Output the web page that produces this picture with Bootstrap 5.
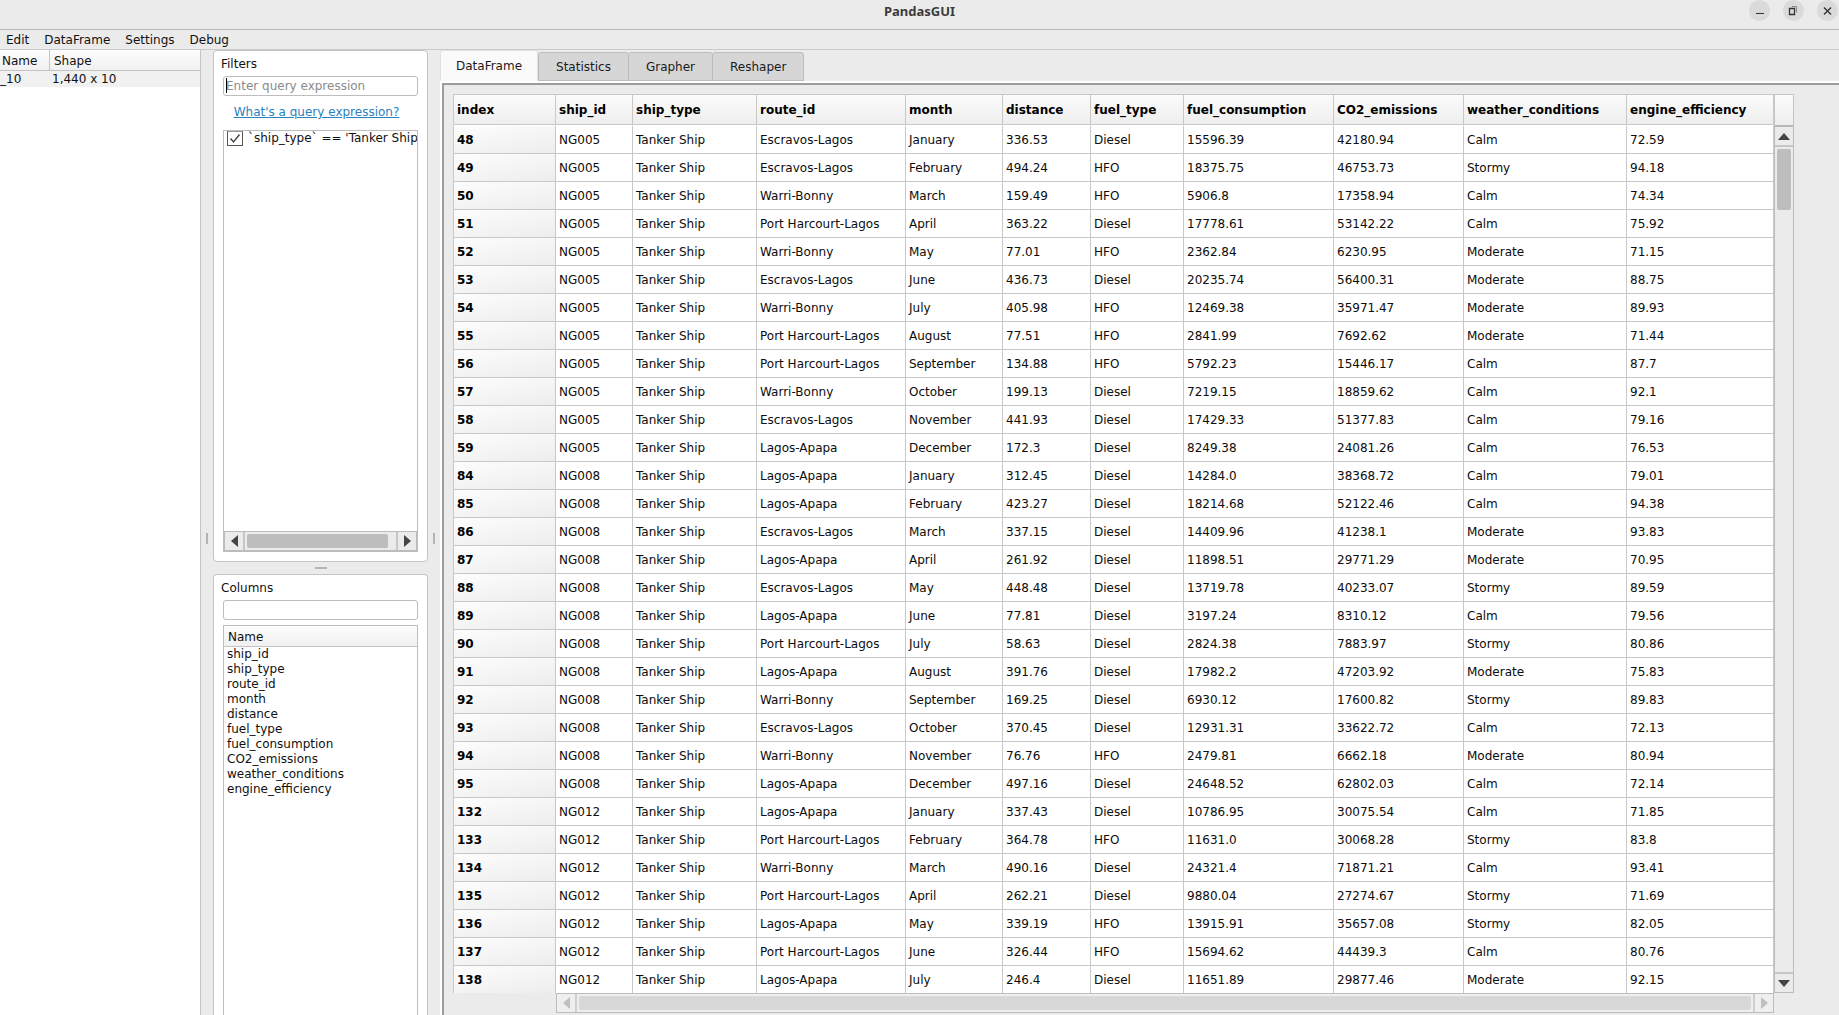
<!DOCTYPE html>
<html lang="en">
<head>
<meta charset="utf-8">
<meta name="viewport" content="width=device-width, initial-scale=1">
<title>PandasGUI</title>
<link href="https://cdn.jsdelivr.net/npm/bootstrap@5.3.0/dist/css/bootstrap.min.css" rel="stylesheet">
<style>
:root { --line: #c4c4c4; --win: #ebebeb; }
body { font: 12px/15px "DejaVu Sans", sans-serif; color: #111; background: var(--win); }
button { font: inherit; color: inherit; border: 0; padding: 0; background: none; }

/* window frame */
.titlebar { height: 30px; border-bottom: 1px solid #b9b9b9; }
.app-title { font: 700 13px/22px "Noto Sans", sans-serif; color: #3b3b3b; }
.win-btns { top: 0; right: 1px; height: 22px; gap: 13px; }
.win-btn { width: 21px; height: 21px; border-radius: 50%; background: #dadada; }
.win-btn svg { display: block; margin: auto; }
.menubar { height: 20px; padding: 2px 6px 0; gap: 15px; border-bottom: 1px solid #cacaca; }

/* left: list of frames */
.frames-pane { width: 201px; border-right: 1px solid var(--line); }
.plain-grid { border-collapse: separate; border-spacing: 0; table-layout: fixed; width: 100%; }
.plain-grid th { font-weight: 400; height: 21px; padding: 2px 4px 0; border-bottom: 1px solid var(--line); background: linear-gradient(#fdfdfd, #f0f0f0); }
.frames-pane td { height: 16px; background: #f1f1f1; }
.frames-pane .c-name { width: 50px; padding: 2px 0 0 2px; border-right: 1px solid var(--line); }
.frames-pane td:first-child { padding: 0; }
.frames-pane td + td { padding: 0 2px; }

/* splitters */
.split-v { width: 12px; }
.split-v::after { content: ""; width: 2px; height: 11px; margin-top: 11px; background: #b4b4b4; }
.split-h { height: 12px; }
.split-h::after { content: ""; width: 12px; height: 2px; background: #b4b4b4; }

/* docks */
.docks { width: 215px; }
.dock { background: #fff; border: 1px solid var(--line); border-radius: 4px; padding: 6px 9px 9px; }
.dock-filters { height: 512px; }
.dock-columns { border-bottom: 0; border-radius: 4px 4px 0 0; padding-bottom: 0; }
.dock-title { margin: 0 -2px 4px; }
.line-edit { width: 100%; height: 20px; border: 1px solid #bdbdbd; border-radius: 3px; padding: 0 2px; font: inherit; background: #fff; outline: 0; }
.line-edit::placeholder { color: #8b8b8b; opacity: 1; }
.caret { left: 3px; top: 2px; width: 1px; height: 15px; background: #000; }
.help-link { color: #2a82bd; margin: 9px 8px 10px 0; }
.view-box { border: 1px solid #bdbdbd; }
.dock-columns .view-box { margin-top: 5px; }
.filter-item { padding: 0 0 0 3px; gap: 5px; white-space: nowrap; overflow: hidden; }
.tick { appearance: none; flex: none; width: 16px; height: 15px; margin: 0; border: 1px solid #555; border-top-color: #999; background: #fff url("data:image/svg+xml,%3Csvg xmlns='http://www.w3.org/2000/svg' viewBox='0 0 14 13'%3E%3Cpath d='M2.5 6.5l3 3.5 6-7.5' fill='none' stroke='%23444' stroke-width='1.4'/%3E%3C/svg%3E") center/14px 13px no-repeat; }
.column-list td { height: 15px; padding: 0 3px; }

/* scroll bars */
.sb { background: #ebebeb; border: 1px solid #bcbcbc; }
.sb-h { height: 20px; }
.sb-v { width: 20px; }
.sb button { flex: none; display: flex; align-items: center; justify-content: center; color: #444; }
.sb-h button { width: 20px; }
.sb-v button { height: 20px; }
.sb-h button:first-child { border-right: 2px solid #c6c6c6; }
.sb-h button:last-child { border-left: 2px solid #c6c6c6; }
.sb-v button:first-child { border-bottom: 2px solid #c6c6c6; }
.sb-v button:last-child { border-top: 2px solid #c6c6c6; }
.sb-thumb { background: #bdbdbd; border-radius: 2px; }
.sb-h .sb-thumb { margin: 2px; }
.sb-v .sb-thumb { margin: 2px; height: 61px; }
.sb.off { background: #efefef; }
.sb.off .sb-thumb { background: #d8d8d8; }
.sb.off button { color: #bfbfbf; }
.sb.off button:first-child, .sb.off button:last-child { border-color: #cfcfcf; }

/* tabs */
.tab-row { height: 31px; }
.tab-row.nav-tabs { border: 0; }
.tab-row .nav-link { height: 29px; padding: 1px 17px 0; border: 1px solid #bdbdbd; border-radius: 3px 3px 0 0; margin: 0 -1px 0 0; color: #1a1a1a; background: #d6d6d6; }
.tab-row .nav-link.active { height: 31px; padding: 1px 15px 0; margin-right: 0; background: #fafafa; border-bottom-color: #fafafa; color: #1a1a1a; }
.tab-body { border-top: 2px solid #fff; border-left: 2px solid #fff; }
.tab-inner { border-top: 2px solid #9c9c9c; border-left: 2px solid #9c9c9c; padding: 9px 45px 0 9px; }

/* data grid */
.data-grid { border-collapse: separate; border-spacing: 0; table-layout: fixed; width: 100%; color: #0c0c0c; }
.data-grid th, .data-grid td { padding: 2px 3px 0; border-right: 1px solid #c8c8c8; border-bottom: 1px solid #c8c8c8; white-space: nowrap; overflow: hidden; }
.data-grid th { color: #000; background: linear-gradient(170deg, #fdfdfd, #ededed); }
.data-grid th:first-child { border-left: 1px solid #c8c8c8; }
.data-grid thead th { height: 31px; border-top: 1px solid #c8c8c8; background: linear-gradient(#fbfbfb, #eeeeee); }
.data-grid td { height: 28px; background: #fff; }
.data-grid tbody tr:first-child > * { height: 29px; border-top: 1px solid #fff; }
.data-grid tbody tr:last-child > * { border-bottom: 0; height: 27px; }
.head-cap { height: 33px; border: 1px solid #c4c4c4; border-bottom: 2px solid #b8b8b8; background: linear-gradient(#fbfbfb, #eeeeee); }
.under-grid { margin-left: 103px; }
.side-bar { padding-bottom: 22px; }
</style>
<script src="https://cdn.jsdelivr.net/npm/bootstrap@5.3.0/dist/js/bootstrap.bundle.min.js"></script>
</head>
<body class="vh-100 d-flex flex-column overflow-hidden">

<header class="titlebar position-relative flex-shrink-0 text-center">
  <div class="app-title">PandasGUI</div>
  <div class="win-btns position-absolute d-flex">
    <button class="win-btn" aria-label="Minimize"><svg width="21" height="21"><path d="M7 13.5h8" stroke="#333"/></svg></button>
    <button class="win-btn" aria-label="Restore"><svg width="21" height="21" fill="none" stroke="#333"><path d="M6.500 8.500h5v6h-5z" stroke-width="1.3"/><path d="M9 6.500h4.500v6" stroke="#888"/></svg></button>
    <button class="win-btn" aria-label="Close"><svg width="21" height="21"><path d="M7 7.500l7 7m0-7l-7 7" stroke="#333" stroke-width="1.4"/></svg></button>
  </div>
</header>

<nav class="menubar d-flex flex-shrink-0" aria-label="Main menu">
  <button>Edit</button><button>DataFrame</button><button>Settings</button><button>Debug</button>
</nav>

<div class="d-flex flex-grow-1 overflow-hidden">
  <section class="frames-pane bg-white flex-shrink-0" aria-label="Data frames">
    <table class="plain-grid">
      <thead><tr><th class="c-name">Name</th><th>Shape</th></tr></thead>
      <tbody><tr><td>_10</td><td>1,440 x 10</td></tr></tbody>
    </table>
  </section>

  <div class="split-v flex-shrink-0 d-flex align-items-center justify-content-center"></div>

  <div class="docks d-flex flex-column flex-shrink-0">
    <section class="dock dock-filters d-flex flex-column flex-shrink-0">
      <label class="dock-title" for="query">Filters</label>
      <div class="position-relative">
        <input class="line-edit d-block" id="query" type="text" placeholder="Enter query expression">
        <span class="caret position-absolute"></span>
      </div>
      <a class="help-link text-center" href="#">What's a query expression?</a>
      <div class="view-box flex-grow-1 d-flex flex-column justify-content-between overflow-hidden">
        <div class="filter-item d-flex">
          <input class="tick" type="checkbox" id="f0" checked>
          <label for="f0">`ship_type` == 'Tanker Ship</label>
        </div>
        <div class="sb sb-h d-flex">
          <button aria-label="Scroll left"><svg width="7" height="12"><path d="M7 0v12L0 6z" fill="currentColor"/></svg></button>
          <div class="sb-thumb flex-grow-1 me-2"></div>
          <button aria-label="Scroll right"><svg width="7" height="12"><path d="M0 0v12l7-6z" fill="currentColor"/></svg></button>
        </div>
      </div>
    </section>
    <div class="split-h flex-shrink-0 d-flex align-items-center justify-content-center"></div>
    <section class="dock dock-columns d-flex flex-column flex-grow-1">
      <label class="dock-title" for="colsearch">Columns</label>
      <input class="line-edit" id="colsearch" type="text">
      <div class="view-box flex-grow-1 border-bottom-0">
        <table class="plain-grid column-list">
          <thead><tr><th>Name</th></tr></thead>
          <tbody id="columns"></tbody>
        </table>
      </div>
    </section>
  </div>

  <div class="split-v flex-shrink-0 d-flex align-items-center justify-content-center"></div>

  <main class="d-flex flex-column flex-grow-1 overflow-hidden">
    <div class="tab-row nav nav-tabs align-items-end flex-shrink-0" role="tablist">
      <button class="nav-link active" role="tab" aria-selected="true">DataFrame</button>
      <button class="nav-link" role="tab" aria-selected="false">Statistics</button>
      <button class="nav-link" role="tab" aria-selected="false">Grapher</button>
      <button class="nav-link" role="tab" aria-selected="false">Reshaper</button>
    </div>
    <div class="tab-body flex-grow-1 d-flex">
      <div class="tab-inner flex-grow-1 d-flex align-items-start">
        <div class="flex-grow-1">
          <table class="data-grid">
            <colgroup>
              <col width="103"><col width="77"><col width="124"><col width="149"><col width="97"><col width="88">
              <col width="93"><col width="150"><col width="130"><col width="163"><col>
            </colgroup>
            <thead><tr id="heads"></tr></thead>
            <tbody id="rows"></tbody>
          </table>
          <div class="under-grid sb sb-h off d-flex">
            <button aria-label="Scroll left"><svg width="7" height="12"><path d="M7 0v12L0 6z" fill="currentColor"/></svg></button>
            <div class="sb-thumb flex-grow-1"></div>
            <button aria-label="Scroll right"><svg width="7" height="12"><path d="M0 0v12l7-6z" fill="currentColor"/></svg></button>
          </div>
        </div>
        <div class="side-bar align-self-stretch d-flex flex-column">
          <div class="head-cap flex-shrink-0"></div>
          <div class="sb sb-v border-top-0 d-flex flex-column flex-grow-1">
            <button aria-label="Scroll up"><svg width="12" height="7"><path d="M0 7h12L6 0z" fill="currentColor"/></svg></button>
            <div class="sb-thumb"></div>
            <button class="mt-auto" aria-label="Scroll down"><svg width="12" height="7"><path d="M0 0h12L6 7z" fill="currentColor"/></svg></button>
          </div>
        </div>
      </div>
    </div>
  </main>
</div>

<script>
const names = ["ship_id","ship_type","route_id","month","distance","fuel_type","fuel_consumption","CO2_emissions","weather_conditions","engine_efficiency"];
const routes = {E:"Escravos-Lagos", W:"Warri-Bonny", P:"Port Harcourt-Lagos", L:"Lagos-Apapa"};
const fuels = {D:"Diesel", H:"HFO"};
const skies = {C:"Calm", S:"Stormy", M:"Moderate"};
const months = ["January","February","March","April","May","June","July","August","September","October","November","December"];
// ship, first index, then one record per month: route distance fuel consumption CO2 weather efficiency
const ships = [
["NG005",48,`E 336.53 D 15596.39 42180.94 C 72.59
E 494.24 H 18375.75 46753.73 S 94.18
W 159.49 H 5906.8 17358.94 C 74.34
P 363.22 D 17778.61 53142.22 C 75.92
W 77.01 H 2362.84 6230.95 M 71.15
E 436.73 D 20235.74 56400.31 M 88.75
W 405.98 H 12469.38 35971.47 M 89.93
P 77.51 H 2841.99 7692.62 M 71.44
P 134.88 H 5792.23 15446.17 C 87.7
W 199.13 D 7219.15 18859.62 C 92.1
E 441.93 D 17429.33 51377.83 C 79.16
L 172.3 D 8249.38 24081.26 C 76.53`],
["NG008",84,`L 312.45 D 14284.0 38368.72 C 79.01
L 423.27 D 18214.68 52122.46 C 94.38
E 337.15 D 14409.96 41238.1 M 93.83
L 261.92 D 11898.51 29771.29 M 70.95
E 448.48 D 13719.78 40233.07 S 89.59
L 77.81 D 3197.24 8310.12 C 79.56
P 58.63 D 2824.38 7883.97 S 80.86
L 391.76 D 17982.2 47203.92 M 75.83
W 169.25 D 6930.12 17600.82 S 89.83
E 370.45 D 12931.31 33622.72 C 72.13
W 76.76 H 2479.81 6662.18 M 80.94
L 497.16 D 24648.52 62802.03 C 72.14`],
["NG012",132,`L 337.43 D 10786.95 30075.54 C 71.85
P 364.78 H 11631.0 30068.28 S 83.8
W 490.16 D 24321.4 71871.21 C 93.41
P 262.21 D 9880.04 27274.67 S 71.69
L 339.19 H 13915.91 35657.08 S 82.05
P 326.44 H 15694.62 44439.3 C 80.76
L 246.4 D 11651.89 29877.46 M 92.15`]];
document.getElementById("columns").innerHTML = names.map(n => `<tr><td>${n}</td></tr>`).join("");
document.getElementById("heads").innerHTML = ["index", ...names].map(n => `<th scope="col">${n}</th>`).join("");
document.getElementById("rows").innerHTML = ships.flatMap(([ship, first, text]) => text.split("\n").map((line, i) => {
  const [r, d, f, use, co2, w, eff] = line.split(" ");
  return `<tr><th scope="row">${first + i}</th>` + [ship, "Tanker Ship", routes[r], months[i], d, fuels[f], use, co2, skies[w], eff].map(v => `<td>${v}</td>`).join("") + "</tr>";
})).join("");
</script>
</body>
</html>
